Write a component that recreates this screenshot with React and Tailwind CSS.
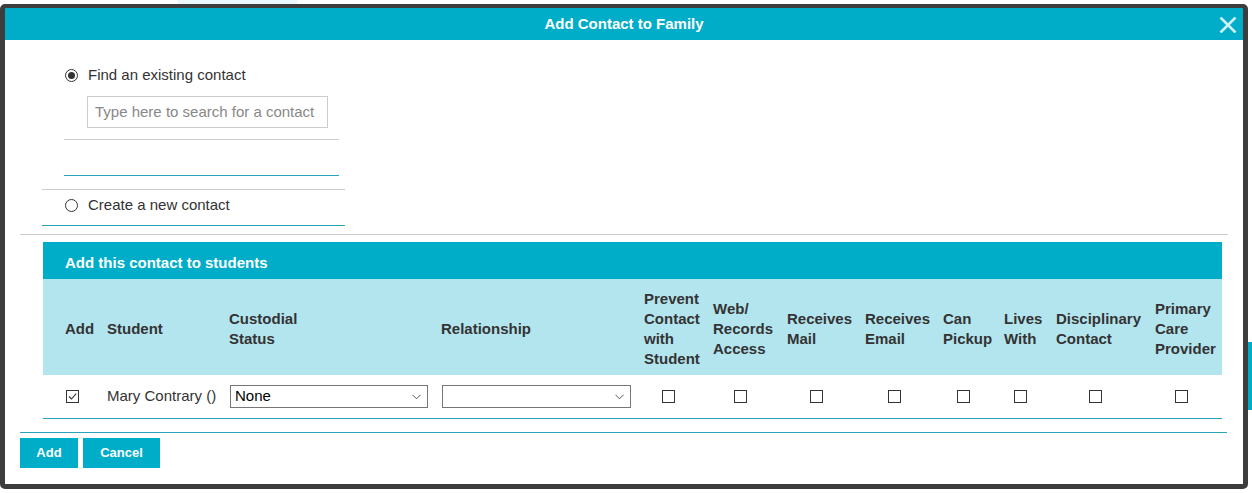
import React from "react";

const cols = [57, 122, 213, 203, 69, 74, 78, 78, 61, 52, 99, 73];
const pads = [22, 7, 7, 6, 6, 6, 6, 6, 6, 6, 6, 6];

function Box({ checked }) {
  return (
    <span className="inline-flex h-[13px] w-[13px] items-center justify-center border border-[#333] bg-white">
      {checked && (
        <svg width="11" height="11" viewBox="0 0 11 11">
          <path d="M2 5.5 L4.5 8 L9.2 2.6" fill="none" stroke="#333" strokeWidth="1.1" />
        </svg>
      )}
    </span>
  );
}

function Radio({ checked }) {
  return (
    <span className="inline-flex h-[13px] w-[13px] items-center justify-center rounded-full border border-[#333] bg-white">
      {checked && <span className="h-[7px] w-[7px] rounded-full bg-[#333]" />}
    </span>
  );
}

function Select({ value, width }) {
  return (
    <div
      className="flex h-[23px] items-center justify-between border border-[#767676] bg-white pl-[4px] pr-[6px] text-[15px] text-black"
      style={{ width }}
    >
      <span>{value}</span>
      <svg width="9" height="6" viewBox="0 0 9 6">
        <path d="M0.5 0.8 L4.5 4.8 L8.5 0.8" fill="none" stroke="#555" strokeWidth="1" />
      </svg>
    </div>
  );
}

const headers = [
  ["Add"],
  ["Student"],
  ["Custodial", "Status"],
  ["Relationship"],
  ["Prevent", "Contact", "with", "Student"],
  ["Web/", "Records", "Access"],
  ["Receives", "Mail"],
  ["Receives", "Email"],
  ["Can", "Pickup"],
  ["Lives", "With"],
  ["Disciplinary", "Contact"],
  ["Primary", "Care", "Provider"],
];

export default function App() {
  return (
    <div
      className="relative h-[493px] w-[1252px] overflow-hidden bg-white text-[#333]"
      style={{ fontFamily: '"Liberation Sans", Arial, sans-serif' }}
    >
      <div className="flex h-[4px]">
        <div className="ml-[178px] h-[4px] w-[119px] bg-[#eaf8fb]" />
      </div>
      <div className="flex">
        <div className="h-[485px] w-[1248px] rounded-[5px] border-t-4 border-r-[5px] border-b-[5px] border-l-[5px] border-[#3d3d3d] bg-white">
          <div className="relative flex h-[32px] items-center justify-center bg-[#00adc8] pt-[1px] text-[15px] font-bold text-white">
            Add Contact to Family
            <svg className="absolute top-[9px] right-[6px]" width="18" height="16" viewBox="0 0 18 16">
              <path d="M1.5 0.5 L16.5 15.5 M16.5 0.5 L1.5 15.5" stroke="#d2f0f5" strokeWidth="2.6" />
            </svg>
          </div>

          <div className="ml-[59px] w-[275px] pt-[25px]">
            <div className="flex h-[20px] items-center pl-[1px] text-[15px]">
              <Radio checked />
              <span className="ml-[10px]">Find an existing contact</span>
            </div>
            <div className="mt-[11px] ml-[23px] flex h-[32px] w-[241px] items-center border border-[#ccc] pl-[7px] text-[15px] text-[#888]">
              Type here to search for a contact
            </div>
            <div className="mt-[11px] h-px w-full bg-[#ccc]" />
            <div className="mt-[35px] h-px w-full bg-[#2aa3b8]" />
          </div>

          <div className="mt-[13px] ml-[37px] w-[303px]">
            <div className="h-px w-full bg-[#ccc]" />
            <div className="mt-[5px] flex h-[20px] items-center pl-[23px] text-[15px]">
              <Radio />
              <span className="ml-[10px]">Create a new contact</span>
            </div>
            <div className="mt-[10px] h-px w-full bg-[#2aa3b8]" />
          </div>

          <div className="mt-[8px] ml-[15px] h-px w-[1208px] bg-[#ccc]" />

          <div className="mt-[7px] ml-[38px] w-[1179px]">
            <div className="flex h-[37px] items-center bg-[#00adc8] pt-[5px] pl-[22px] text-[15px] font-bold text-white">
              Add this contact to students
            </div>
            <div className="flex h-[96px] bg-[#b3e5ef] pt-[4px] text-[15px] leading-[20px] font-bold text-[#333]">
              {headers.map((h, i) => (
                <div
                  key={i}
                  className="flex items-center"
                  style={{ width: cols[i], paddingLeft: pads[i] }}
                >
                  <div>
                    {h.map((l) => (
                      <div key={l}>{l}</div>
                    ))}
                  </div>
                </div>
              ))}
            </div>
            <div className="flex h-[44px] border-b border-[#2aa3b8] text-[15px]">
              <div className="flex items-center justify-center pl-[2px] pb-[1px]" style={{ width: cols[0] }}>
                <Box checked />
              </div>
              <div className="flex items-center pl-[7px]" style={{ width: cols[1] }}>
                Mary Contrary ()
              </div>
              <div className="flex items-center pl-[8px]" style={{ width: cols[2] }}>
                <Select value="None" width={198} />
              </div>
              <div className="flex items-center pl-[7px]" style={{ width: cols[3] }}>
                <Select value="" width={189} />
              </div>
              {cols.slice(4).map((w, i) => (
                <div key={i} className="flex items-center justify-center pr-[8px] pb-[1px]" style={{ width: w }}>
                  <Box />
                </div>
              ))}
            </div>
          </div>

          <div className="mt-[13px] ml-[15px] h-px w-[1207px] bg-[#2aa3b8]" />

          <div className="mt-[5px] ml-[15px] flex gap-[5px] text-[13px] font-bold text-white">
            <div className="flex h-[30px] w-[58px] items-center justify-center bg-[#00adc8]">Add</div>
            <div className="flex h-[30px] w-[77px] items-center justify-center bg-[#00adc8]">Cancel</div>
          </div>
        </div>
        <div className="flex w-[4px] flex-col">
          <div className="mt-[338px] h-[68px] w-[4px] bg-[#00adc8]" />
        </div>
      </div>
    </div>
  );
}
